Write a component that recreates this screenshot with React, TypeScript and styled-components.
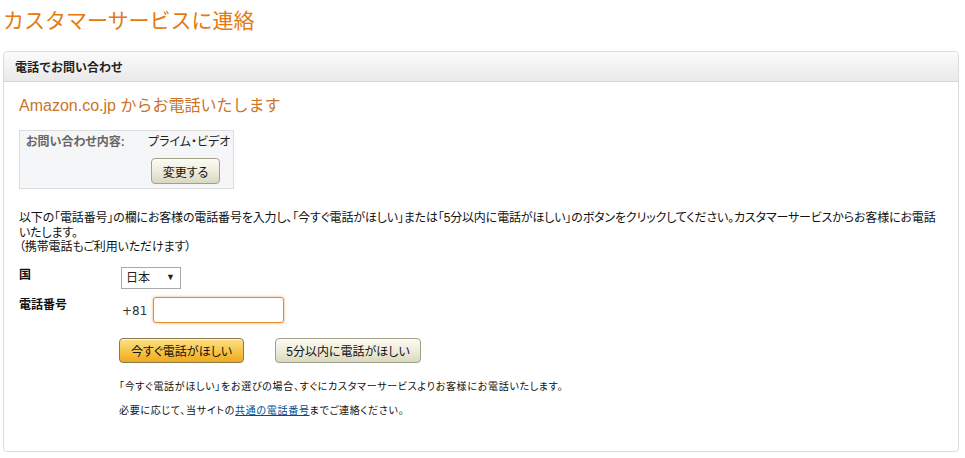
import React, { useState } from "react";
import styled, { createGlobalStyle } from "styled-components";

const GlobalStyle = createGlobalStyle`
  body {
    margin: 0;
    background: #fff;
    color: #111;
    font-family: "Liberation Sans", "Noto Sans CJK JP", sans-serif;
    font-size: 12px;
  }
`;

const Page = styled("div")`
  padding: 6px 6px 0 3px;
`;

const Title = styled("h1")`
  margin: 0 0 15px;
  font-size: 21px;
  line-height: 30px;
  font-weight: normal;
  color: #e47911;
`;

const Panel = styled("section")`
  border: 1px solid #dcdcdc;
  border-radius: 4px;
`;

const PanelHeader = styled("div")`
  height: 29px;
  display: flex;
  align-items: center;
  padding-left: 11px;
  border-bottom: 1px solid #d6d6d6;
  border-radius: 4px 4px 0 0;
  background: linear-gradient(#fbfbfb, #e9e9e9);
  font-size: 12px;
  font-weight: bold;
  color: #222;
`;

const PanelBody = styled("div")`
  padding: 14px 15px 33px;
  font-feature-settings: "palt";
`;

const SubTitle = styled("h2")`
  margin: 0;
  font-size: 16px;
  line-height: 20px;
  font-weight: normal;
  color: #c8752a;
  font-feature-settings: normal;
`;

const InfoBox = styled("div")`
  width: 207px;
  margin-top: 14px;
  padding: 4px 0 4px 6px;
  display: grid;
  grid-template-columns: 122px auto;
  row-gap: 9px;
  border: 1px solid #dddddd;
  background: #f4f6f8;
  line-height: 14px;
  white-space: nowrap;
`;

const InfoLabel = styled("span")`
  font-weight: bold;
  color: #666;
`;

const InfoValue = styled("span")`
  color: #222;
`;

const SoftButton = styled("button")<{ $primary?: boolean }>`
  height: 25px;
  padding: 0;
  border-radius: 4px;
  font-family: inherit;
  font-size: 12px;
  font-feature-settings: "palt";
  white-space: nowrap;
  color: #111;
  cursor: pointer;
  border: 1px solid ${(p) => (p.$primary ? "#8b7a4f" : "#a3a08a")};
  background: ${(p) =>
    p.$primary
      ? "linear-gradient(#fde08a, #f6c445 55%, #efaa1e)"
      : "linear-gradient(#fbfbf3, #ecebdb 55%, #d9d7bf)"};
  box-shadow: inset 0 1px 0 rgba(255, 255, 255, 0.7);
`;

const ChangeButton = styled(SoftButton)`
  grid-column: 2;
  justify-self: start;
  margin-left: 3px;
  width: 69px;
  height: 26px;
`;

const Intro = styled("p")`
  margin: 22px 0 0;
  line-height: 14.5px;
  letter-spacing: -0.15px;
  color: #111;
`;

const FormRow = styled("div")<{ $top: number }>`
  display: flex;
  align-items: flex-start;
  margin-top: ${(p) => p.$top}px;
`;

const FieldLabel = styled("label")`
  width: 102px;
  flex-shrink: 0;
  font-weight: bold;
  line-height: 16px;
`;

const SelectWrap = styled("div")`
  position: relative;
  width: 60px;
`;

const CountrySelect = styled("select")`
  appearance: none;
  width: 60px;
  height: 22px;
  padding: 0 0 0 4px;
  border: 1px solid #a9a9a9;
  border-radius: 0;
  background: #fff;
  font-family: inherit;
  font-size: 12px;
  color: #222;
`;

const Arrow = styled("span")`
  position: absolute;
  right: 6px;
  top: 5px;
  font-size: 9px;
  color: #222;
  pointer-events: none;
`;

const PhoneField = styled("div")`
  display: flex;
  align-items: center;
  gap: 6px;
  margin-left: 1px;
`;

const Prefix = styled("span")`
  font-family: "DejaVu Sans", sans-serif;
  font-size: 12px;
  color: #333;
  padding-top: 3px;
`;

const PhoneInput = styled("input")`
  width: 131px;
  height: 26px;
  box-sizing: border-box;
  border: 1px solid #e38d2f;
  border-radius: 3px;
  box-shadow: 0 0 3px rgba(228, 121, 17, 0.6);
  outline: none;
  font-size: 13px;
`;

const ActionRow = styled("div")`
  display: flex;
  gap: 31px;
  margin: 15px 0 0 100px;
`;

const Notes = styled("div")`
  margin: 17px 0 0 100px;
  display: flex;
  flex-direction: column;
  gap: 10px;
  font-size: 10px;
  line-height: 14px;
  letter-spacing: 0.7px;
  color: #111;
`;

const Link = styled("a")`
  color: #004b91;
  text-decoration: underline;
`;

const App = () => {
  const [country, setCountry] = useState<string>("JP");
  const [phone, setPhone] = useState<string>("");

  return (
    <Page>
      <GlobalStyle />
      <Title>カスタマーサービスに連絡</Title>
      <Panel>
        <PanelHeader>電話でお問い合わせ</PanelHeader>
        <PanelBody>
          <SubTitle>Amazon.co.jp からお電話いたします</SubTitle>
          <InfoBox>
            <InfoLabel>お問い合わせ内容:</InfoLabel>
            <InfoValue>プライム・ビデオ</InfoValue>
            <ChangeButton>変更する</ChangeButton>
          </InfoBox>
          <Intro>
            以下の「電話番号」の欄にお客様の電話番号を入力し、「今すぐ電話がほしい」または「5分以内に電話がほしい」のボタンをクリックしてください。カスタマーサービスからお客様にお電話いたします。
            <br />
            （携帯電話もご利用いただけます）
          </Intro>
          <FormRow $top={12}>
            <FieldLabel>国</FieldLabel>
            <SelectWrap>
              <CountrySelect
                value={country}
                onChange={(e) => setCountry(e.target.value)}
              >
                <option value="JP">日本</option>
              </CountrySelect>
              <Arrow>▼</Arrow>
            </SelectWrap>
          </FormRow>
          <FormRow $top={8}>
            <FieldLabel>電話番号</FieldLabel>
            <PhoneField>
              <Prefix>+81</Prefix>
              <PhoneInput
                value={phone}
                onChange={(e) => setPhone(e.target.value)}
              />
            </PhoneField>
          </FormRow>
          <ActionRow>
            <SoftButton $primary style={{ width: 125 }}>
              今すぐ電話がほしい
            </SoftButton>
            <SoftButton style={{ width: 146 }}>5分以内に電話がほしい</SoftButton>
          </ActionRow>
          <Notes>
            <span>
              「今すぐ電話がほしい」をお選びの場合、すぐにカスタマーサービスよりお客様にお電話いたします。
            </span>
            <span>
              必要に応じて、当サイトの<Link href="#">共通の電話番号</Link>
              までご連絡ください。
            </span>
          </Notes>
        </PanelBody>
      </Panel>
    </Page>
  );
};

export default App;
